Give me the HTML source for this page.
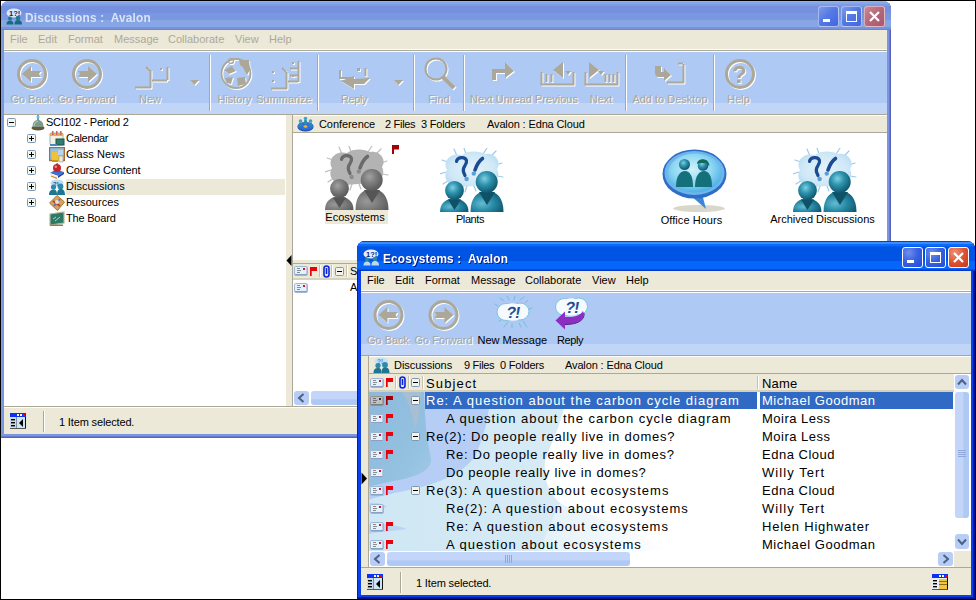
<!DOCTYPE html>
<html>
<head>
<meta charset="utf-8">
<style>
*{box-sizing:border-box;margin:0;padding:0}
html,body{width:976px;height:600px;overflow:hidden;background:#fff}
body{font-family:"Liberation Sans",sans-serif;font-size:11px;color:#000;position:relative}
.abs{position:absolute}
#frame{position:absolute;left:0;top:0;width:976px;height:600px;border:1px solid #000;z-index:100;pointer-events:none}
/* ---------- Window 1 (inactive) ---------- */
#w1{position:absolute;left:1px;top:1px;width:890px;height:437px;background:#7A96DF;box-shadow:inset -1px -1px 0 #5860C0,inset -2px -2px 0 #6A7CD2,inset 1px 0 0 #7F9EE9;border-radius:8px 8px 0 0;overflow:hidden}
#w1 .title{position:absolute;left:0;top:0;width:890px;height:29px;background:linear-gradient(#90B1F5 0px,#90B1F5 1px,#86A7E9 1px,#86A7E9 3px,#7D9CE3 3px,#7D9CE3 5px,#7590DC 5px,#7590DC 12px,#7A97E0 12px,#7A97E0 19px,#86A6E6 19px,#86A6E6 26px,#7892DD 26px,#7892DD 28px,#6C82D4 28px,#6C82D4 29px)}
#w1 .ttext{position:absolute;left:24px;top:9px;transform:scaleX(.91);transform-origin:0 0;font-weight:bold;font-size:13px;color:#D8E4F8;letter-spacing:.2px;white-space:nowrap}
#w1 .client{position:absolute;left:3px;top:29px;width:883px;height:404px;background:#ECE9D8}
.menu span{position:absolute;top:3px;white-space:nowrap}
.tb{background:#AEC9F3}
.tb .band{position:absolute;left:0;bottom:0;width:100%;background:#C1D5F7}
.lbl{position:absolute;white-space:nowrap;font-size:11px;text-align:center}
.dis{color:#ACA899;text-shadow:1px 1px 0 #fff}
.sep{position:absolute;width:2px;background:#ACA899;border-right:1px solid #fff}
.row{position:absolute;left:0;white-space:nowrap;font-size:11px}
.cap{position:absolute;width:21px;height:21px;border-radius:3px;border:1px solid #fff}
.dsc .hd{fill:var(--hd)}.dsc .bd{fill:var(--bd)}.dsc .vv{fill:var(--vv)}.dsc .cld{fill:var(--cld)}.dsc .spk{stroke:var(--spk)}.dsc .qm{stroke:var(--qm)}.dsc .dot{fill:var(--dot)}
.vt{font-size:13px;letter-spacing:.75px;white-space:nowrap;position:absolute}
.s0{letter-spacing:1.0px}.s1{letter-spacing:0.97px}.s2{letter-spacing:0.76px}.s3{letter-spacing:0.69px}.s4{letter-spacing:0.64px}.s5{letter-spacing:1.04px}.s6{letter-spacing:1.02px}.s7{letter-spacing:0.99px}.s8{letter-spacing:0.99px}.n0{letter-spacing:0.54px}.n8{letter-spacing:0.54px}.n1{letter-spacing:0.48px}.n2{letter-spacing:0.48px}.n3{letter-spacing:0.51px}.n5{letter-spacing:0.51px}.n4{letter-spacing:1.07px}.n6{letter-spacing:1.07px}.n7{letter-spacing:0.78px}
</style>
</head>
<body>

<svg width="0" height="0" style="position:absolute">
<defs>
  <radialGradient id="gT" cx="40%" cy="35%" r="65%"><stop offset="0" stop-color="#7FD0E2"/><stop offset=".45" stop-color="#2F93AE"/><stop offset="1" stop-color="#0E5770"/></radialGradient>
  <radialGradient id="gTb" cx="35%" cy="60%" r="75%"><stop offset="0" stop-color="#63BDD3"/><stop offset=".5" stop-color="#2587A3"/><stop offset="1" stop-color="#0D5068"/></radialGradient>
  <radialGradient id="gG" cx="40%" cy="35%" r="65%"><stop offset="0" stop-color="#A2A2A2"/><stop offset=".45" stop-color="#7E7E7E"/><stop offset="1" stop-color="#5A5A5A"/></radialGradient>
  <radialGradient id="gGb" cx="35%" cy="60%" r="75%"><stop offset="0" stop-color="#999"/><stop offset=".5" stop-color="#7A7A7A"/><stop offset="1" stop-color="#585858"/></radialGradient>
  <radialGradient id="gC" cx="50%" cy="50%" r="60%"><stop offset="0" stop-color="#E4F3FB"/><stop offset=".7" stop-color="#CFE8F7"/><stop offset="1" stop-color="#B5DAF2"/></radialGradient>
  <symbol id="disc" viewBox="0 0 64 64">
    <g style="stroke:var(--spk)" stroke-width="1.2" stroke-linecap="round">
      <path d="M17 8 L14 1 M26 6 L24 0 M43 6 L47 0 M50 9 L56 3 M56 17 L62 15 M57 28 L63 29 M8 14 L2 12 M6 24 L0 26 M9 32 L3 36 M27 38 L25 44 M34 38 L36 43"/>
    </g>
    <path style="fill:var(--cld)" d="M7 22 C2 13 11 4 22 7 C28 2 40 3 45 6 C55 4 62 14 57 21 C61 29 55 37 46 37 L20 39 C9 39 2 30 7 22Z"/>
    <path style="stroke:var(--qm);fill:none" stroke-width="3.2" stroke-linecap="round" d="M16.5 13.5 C17 9 25 8 26.5 12.5 C27.5 17 22 18 23.5 24 L25 27.5"/>
    <circle style="fill:var(--dot)" cx="26.6" cy="31" r="2.2"/>
    <path style="stroke:var(--qm);fill:none" stroke-width="3.6" stroke-linecap="round" d="M42.5 10.5 C39 13 36.5 17.5 35 22"/>
    <circle style="fill:var(--dot)" cx="33.8" cy="25.6" r="2.2"/>
    <path style="fill:var(--bd)" d="M0 64 C0 55 6 50.5 14 50.5 C22 50.5 28.5 55 28.5 64Z"/>
    <path style="fill:var(--vv)" d="M8 51.5 L14.5 62 L21 51.5Z"/>
    <circle style="fill:var(--hd)" cx="14.5" cy="42.5" r="9.4"/>
    <path style="fill:var(--bd)" d="M30.5 64 C30.5 50 37 43 47 43 C57 43 63.5 50 63.5 64Z"/>
    <path style="fill:var(--vv)" d="M39 44 L47 57 L55 44Z"/>
    <circle style="fill:var(--hd)" cx="46.7" cy="34" r="11"/>
  </symbol>
  <symbol id="env" viewBox="0 0 14 10">
    <rect x=".5" y=".5" width="13" height="9" rx="1.2" fill="#E6F0FA" stroke="#9DB6D6"/>
    <rect x="1" y="8" width="12" height="1" fill="#86A2C6"/><rect x="12" y="1" width="1" height="7" fill="#B5C9E2"/>
    <rect x="3" y="2" width="3" height="1" fill="#8C8C8C"/><rect x="3" y="4" width="4" height="1" fill="#8C8C8C"/><rect x="3" y="6" width="3" height="1" fill="#8C8C8C"/>
    <rect x="9" y="2" width="2" height="2" fill="#D0142C"/>
  </symbol>
  <symbol id="flag" viewBox="0 0 8 9">
    <rect x="0" y="0" width="7" height="4" fill="#E8000A"/><rect x="0" y="0" width="1.700" height="9" fill="#E8000A"/>
  </symbol>
  <symbol id="mbox" viewBox="0 0 9 9">
    <rect x=".5" y=".5" width="8" height="8" rx="1" fill="#F4F3EC" stroke="#7898B5"/>
    <rect x="2" y="4" width="5" height="1" fill="#000"/>
  </symbol>
  <symbol id="pbox" viewBox="0 0 9 9">
    <rect x=".5" y=".5" width="8" height="8" rx="1" fill="#F4F3EC" stroke="#7898B5"/>
    <rect x="2" y="4" width="5" height="1" fill="#000"/><rect x="4" y="2" width="1" height="5" fill="#000"/>
  </symbol>
  <symbol id="clip" viewBox="0 0 7 13">
    <rect x="1" y="1" width="5" height="11" rx="2.5" fill="none" stroke="#0A24E0" stroke-width="1.6"/>
    <rect x="2.7" y="3" width="1.6" height="6" fill="#0A24E0"/>
  </symbol>
  <symbol id="sbicon" viewBox="0 0 16 16">
    <rect x="0" y="0" width="16" height="16" fill="#CDE6F5"/>
    <rect x="0" y="0" width="16" height="4" fill="#0A32F0"/>
    <rect x="7" y="1" width="2" height="2" fill="#FFF6D0"/><rect x="10" y="1" width="2" height="2" fill="#FFF6D0"/><rect x="13" y="1" width="2" height="2" fill="#F00"/>
    <rect x="0" y="4" width="6" height="12" fill="#C9D9E8"/><rect x="6" y="4" width="1" height="12" fill="#7F8FA0"/>
    <rect x="1" y="6" width="4" height="1.4" fill="#000"/><rect x="1" y="9" width="4" height="1.4" fill="#000"/><rect x="1" y="12" width="4" height="1.4" fill="#000"/>
    <path d="M13 6 L9 10 L13 14Z" fill="#000"/>
    <rect x="15" y="4" width="1" height="12" fill="#111"/><rect x="0" y="15" width="16" height="1" fill="#555"/>
  </symbol>
</defs>
</svg>
<!-- ================= WINDOW 1 ================= -->
<div id="w1">
  <div class="title"></div>
  <svg class="abs" style="left:5px;top:7px" width="17" height="17" viewBox="0 0 17 17"><ellipse cx="8" cy="5" rx="7.5" ry="4.6" fill="#DCE8FA"/><text x="3" y="8" font-family="Liberation Sans" font-size="7.5" font-weight="bold" fill="#0B1E7A">1?!</text><circle cx="4" cy="10.5" r="2" fill="#1E7A8E"/><path d="M0.5 16.5 C0.5 13.5 2 12.5 4 12.5 C6 12.5 7.5 13.5 7.5 16.5Z" fill="#186B7E"/><circle cx="12" cy="10" r="2.3" fill="#1E7A8E"/><path d="M8.5 16.5 C8.5 13 10 12 12 12 C14 12 16 13 16 16.5Z" fill="#186B7E"/></svg>
  <div class="ttext">Discussions :&nbsp; Avalon</div>
  <div class="cap" style="border-color:rgba(255,255,255,.5);left:817px;top:5px;background:linear-gradient(135deg,#7F9BE6 0,#5379E6 45%,#4466DD 100%)"><div class="abs" style="left:4px;top:12px;width:7px;height:3px;background:#fff"></div></div>
  <div class="cap" style="border-color:rgba(255,255,255,.5);left:840px;top:5px;background:linear-gradient(135deg,#7F9BE6 0,#5379E6 45%,#4466DD 100%)"><div class="abs" style="left:4px;top:4px;width:11px;height:11px;border:1px solid #fff;border-top:3px solid #fff"></div></div>
  <div class="cap" style="border-color:rgba(255,255,255,.5);left:863px;top:5px;background:linear-gradient(135deg,#C78A97 0,#B4677A 50%,#A85870 100%)"><svg class="abs" style="left:3px;top:3px" width="13" height="13" viewBox="0 0 13 13"><path d="M2 2 L11 11 M11 2 L2 11" stroke="#fff" stroke-width="2.2"/></svg></div>
  <div class="client">
    <!-- menu -->
    <div class="abs menu" style="left:0;top:0;width:883px;height:19px;color:#ACA899">
      <span style="left:6px">File</span><span style="left:34px">Edit</span><span style="left:64px">Format</span><span style="left:110px">Message</span><span style="left:164px">Collaborate</span><span style="left:231px">View</span><span style="left:265px">Help</span>
    </div>
    <div class="abs" style="left:0;top:19px;width:883px;height:1px;background:#fff"></div>
    <div class="abs" style="left:0;top:20px;width:883px;height:1px;background:#ACA899"></div>
    <div class="abs" style="left:0;top:21px;width:883px;height:1px;background:#fff"></div>
    <!-- toolbar -->
    <div class="abs tb" id="tb1" style="left:0;top:22px;width:883px;height:62px">
      <div class="band" style="height:11px"></div>
      <svg class="abs" style="left:0;top:0;filter:drop-shadow(1px 1px 0 #fff)" width="883" height="62" viewBox="4 52 883 62" fill="none" stroke="#ACA899">
  <!-- go back / forward -->
  <circle cx="32" cy="74" r="13.5" stroke-width="3"/>
  <path d="M22 74 L31 66 L31 71 L41 71 L39 74 L41 77 L31 77 L31 82Z" fill="#ACA899" stroke="none"/>
  <circle cx="87" cy="74" r="13.5" stroke-width="3"/>
  <path d="M97 74 L88 66 L88 71 L78 71 L80 74 L78 77 L88 77 L88 82Z" fill="#ACA899" stroke="none"/>
  <!-- new -->
  <path d="M135 87.5 H151 M150.5 88 V70 M146 67 L150 71 M152 80.5 H167 M167.500 80 V67" stroke-width="2"/>
  <rect x="160" y="68" width="2" height="2" fill="#ACA899" stroke="none"/>
  <path d="M190 80 H199 L194.500 85Z" fill="#ACA899" stroke="none"/>
  <!-- history globe -->
  <circle cx="236" cy="73.500" r="14.500" stroke-width="1.800"/>
  <path d="M239 60 L249 60 L250 70 L247 75 L243 68 L240 65Z M224 70 L232 66 L236 71 L229 74Z M225 78 L233 77 L231 84 L227 83Z M237 78 L245 77 L246 84 L238 86Z" fill="#ACA899" stroke="none"/>
  <circle cx="231" cy="61" r="2.500" stroke-width="1.200"/>
  <!-- summarize -->
  <path d="M271 88.500 H287 M286.500 89 V72 M282 68 L286 72 M288 81.500 H298 M298.500 82 V61 M290 68.500 H298 M290 75.500 H298" stroke-width="2"/>
  <rect x="272" y="71" width="2" height="2" fill="#ACA899" stroke="none"/><rect x="272" y="80" width="2" height="2" fill="#ACA899" stroke="none"/><rect x="292" y="62" width="2" height="2" fill="#ACA899" stroke="none"/><rect x="292" y="75" width="2" height="2" fill="#ACA899" stroke="none"/>
  <!-- reply -->
  <path d="M340 70 V78 H352 M365.500 68 V76" stroke-width="1.900"/>
  <path d="M341 81 L354 76 L354 79 L370 78 L364 84 L354 84 L354 89Z" fill="#ACA899" stroke="none"/>
  <rect x="357" y="68" width="3" height="3" fill="#ACA899" stroke="none"/>
  <path d="M394 80 H403 L398.500 85Z" fill="#ACA899" stroke="none"/>
  <!-- find -->
  <circle cx="436" cy="69" r="10.500" stroke-width="2"/>
  <path d="M443 77 L454 88" stroke-width="4.500"/>
  <!-- next unread -->
  <path d="M492 80 V69 H505 V73 H496 V80Z" fill="#ACA899" stroke="none"/>
  <path d="M505 62 L514 71 L505 78Z" fill="#ACA899" stroke="none"/>
  <!-- previous -->
  <path d="M541.500 72 V84.500 H573.500 V72 M546.500 74 V82 M551.500 74 V82" stroke-width="1.900"/>
  <path d="M563 62 V78 L553 70Z" fill="#ACA899" stroke="none"/>
  <path d="M565 71 H571 L568 75Z" fill="#ACA899" stroke="none"/>
  <!-- next -->
  <path d="M585.500 72 V84.500 H617.500 V72 M605.500 74 V82 M609.500 74 V82 M613.500 74 V82" stroke-width="1.900"/>
  <path d="M589 62 V78 L599 70Z" fill="#ACA899" stroke="none"/>
  <path d="M598 71 H604 L601 75Z" fill="#ACA899" stroke="none"/>
  <!-- add to desktop -->
  <path d="M667 82.500 H684 M683.500 83 V64 M678 63.500 H683" stroke-width="1.900"/>
  <path d="M655 66 H661 V72 H664 V68 L671 75 L664 81 V77 H658 C656 77 655 75 655 73Z" fill="#ACA899" stroke="none"/>
  <!-- help -->
  <circle cx="740" cy="74" r="13.500" stroke-width="3"/>
  <text x="732" y="82.500" font-family="Liberation Sans" font-size="24" font-weight="bold" fill="#ACA899" stroke="none">?</text>
</svg>
      <div class="lbl dis" style="left:-32.5px;width:120px;top:41px;line-height:13px">Go Back</div>
      <div class="lbl dis" style="left:22.5px;width:120px;top:41px;line-height:13px">Go Forward</div>
      <div class="lbl dis" style="left:86.0px;width:120px;top:41px;line-height:13px">New</div>
      <div class="lbl dis" style="left:170.5px;width:120px;top:41px;line-height:13px">History</div>
      <div class="lbl dis" style="left:220.0px;width:120px;top:41px;line-height:13px">Summarize</div>
      <div class="lbl dis" style="left:290.0px;width:120px;top:41px;line-height:13px;letter-spacing:-.4px">Reply</div>
      <div class="lbl dis" style="left:375.0px;width:120px;top:41px;line-height:13px">Find</div>
      <div class="lbl dis" style="left:437.0px;width:120px;top:41px;line-height:13px">Next Unread</div>
      <div class="lbl dis" style="left:492.5px;width:120px;top:41px;line-height:13px">Previous</div>
      <div class="lbl dis" style="left:537.0px;width:120px;top:41px;line-height:13px">Next</div>
      <div class="lbl dis" style="left:606.0px;width:120px;top:41px;line-height:13px">Add to Desktop</div>
      <div class="lbl dis" style="left:674.5px;width:120px;top:41px;line-height:13px">Help</div>
      <div class="abs" style="left:205px;top:3px;width:1px;height:56px;background:#ACA899"></div><div class="abs" style="left:206px;top:3px;width:1px;height:56px;background:#fff"></div>
      <div class="abs" style="left:313px;top:3px;width:1px;height:56px;background:#ACA899"></div><div class="abs" style="left:314px;top:3px;width:1px;height:56px;background:#fff"></div>
      <div class="abs" style="left:409px;top:3px;width:1px;height:56px;background:#ACA899"></div><div class="abs" style="left:410px;top:3px;width:1px;height:56px;background:#fff"></div>
      <div class="abs" style="left:459px;top:3px;width:1px;height:56px;background:#ACA899"></div><div class="abs" style="left:460px;top:3px;width:1px;height:56px;background:#fff"></div>
      <div class="abs" style="left:621px;top:3px;width:1px;height:56px;background:#ACA899"></div><div class="abs" style="left:622px;top:3px;width:1px;height:56px;background:#fff"></div>
      <div class="abs" style="left:709px;top:3px;width:1px;height:56px;background:#ACA899"></div><div class="abs" style="left:710px;top:3px;width:1px;height:56px;background:#fff"></div>
    </div>
    <div class="abs" style="left:0;top:84px;width:883px;height:1px;background:#ACA899"></div>
    <!-- tree pane -->
    <div class="abs" id="tree" style="left:0;top:85px;width:282px;height:291px;background:#fff;overflow:hidden">
      <svg class="abs" style="left:3px;top:3px" width="9" height="9"><use href="#mbox"/></svg>
      <svg class="abs" style="left:27px;top:0px" width="14" height="16" viewBox="0 0 14 16"><rect x="6" y="0" width="2" height="5" fill="#4FA3C8"/><circle cx="7" cy="2" r="1.6" fill="#6BC0DC"/><ellipse cx="7" cy="13" rx="6.5" ry="2.6" fill="#5E5A3C"/><path d="M1.5 12 C1.5 7 4 5 7 5 C10 5 12.5 7 12.5 12Z" fill="#7E9A86"/><path d="M3 11 C3 8 5 6.5 7 6.5" stroke="#B9D3C3" fill="none"/></svg>
      <div class="row" style="left:43px;top:0px;line-height:14px;letter-spacing:-0.29px;margin-left:-1px">SCI102 - Period 2</div>
      <svg class="abs" style="left:23px;top:19px" width="9" height="9"><use href="#pbox"/></svg>
      <svg class="abs" style="left:45px;top:16px" width="16" height="16" viewBox="0 0 16 16"><rect x="1" y="2" width="13" height="12" rx="1" fill="#F3F1E2" stroke="#9DB3C8"/><rect x="1" y="2" width="13" height="3" fill="#E8B33A"/><rect x="3" y="0" width="1.5" height="4" fill="#C66"/><rect x="7" y="0" width="1.5" height="4" fill="#C66"/><rect x="11" y="0" width="1.5" height="4" fill="#C66"/><rect x="7" y="8" width="8" height="6" fill="#2E7D6E" stroke="#1B5247"/><rect x="1" y="13" width="7" height="2" fill="#4C86C6"/></svg>
      <div class="row" style="left:62px;top:16px;line-height:14px;letter-spacing:-0.31px;margin-left:0px">Calendar</div>
      <svg class="abs" style="left:23px;top:35px" width="9" height="9"><use href="#pbox"/></svg>
      <svg class="abs" style="left:45px;top:32px" width="16" height="16" viewBox="0 0 16 16"><rect x=".5" y=".5" width="15" height="13" fill="#8FC3E6" stroke="#A86A3C" stroke-width="1.4"/><rect x="3" y="5" width="7" height="9" fill="#F0C23A"/><rect x="9" y="3" width="5" height="5" fill="#B8D4EE"/><rect x="10" y="9" width="4" height="6" fill="#EDE9DA" stroke="#888" stroke-width=".5"/><rect x="3" y="13" width="6" height="2" fill="#C9961E"/></svg>
      <div class="row" style="left:62px;top:32px;line-height:14px;letter-spacing:0.07px;margin-left:0px">Class News</div>
      <svg class="abs" style="left:23px;top:51px" width="9" height="9"><use href="#pbox"/></svg>
      <svg class="abs" style="left:45px;top:48px" width="16" height="16" viewBox="0 0 16 16"><path d="M1 10 L9 13 L15 9 L7 6.5Z" fill="#3B6FD0"/><path d="M1 10 L9 13 L9 15 L1 12Z" fill="#F2F2F2"/><path d="M9 13 L15 9 L15 11 L9 15Z" fill="#1E44A0"/><path d="M2 13 L8 15.3" stroke="#D38A2A" stroke-width="1.3"/><circle cx="8" cy="5" r="4" fill="#C8242B"/><circle cx="6.8" cy="3.8" r="1.3" fill="#E88"/><rect x="7.6" y="0" width="1" height="2" fill="#353"/></svg>
      <div class="row" style="left:62px;top:48px;line-height:14px;letter-spacing:-0.2px;margin-left:0px">Course Content</div>
      <div class="abs" style="left:62px;top:64px;width:219px;height:16px;background:#ECE9D8"></div>
      <svg class="abs" style="left:23px;top:67px" width="9" height="9"><use href="#pbox"/></svg>
      <svg class="abs" style="left:45px;top:64px" width="16" height="16" viewBox="0 0 16 16"><ellipse cx="8" cy="4" rx="6.5" ry="3.6" fill="#B9DDF3"/><text x="4" y="6.5" font-family="Liberation Sans" font-size="6" font-weight="bold" fill="#1C4C94">?!</text><circle cx="4.5" cy="8" r="2.6" fill="#2E8AA6"/><path d="M0 16 C0 12 2 10.5 4.5 10.5 C7 10.5 8 12 8 16Z" fill="#1F7690"/><circle cx="11.5" cy="7.5" r="2.9" fill="#2E8AA6"/><path d="M8 16 C8 11.5 9.5 10 11.8 10 C14 10 16 11.5 16 16Z" fill="#1F7690"/></svg>
      <div class="row" style="left:62px;top:64px;line-height:14px;letter-spacing:0px;margin-left:0px">Discussions</div>
      <svg class="abs" style="left:23px;top:83px" width="9" height="9"><use href="#pbox"/></svg>
      <svg class="abs" style="left:45px;top:80px" width="16" height="16" viewBox="0 0 16 16"><path d="M8 0.5 L15.5 7 L8.5 15.5 L0.5 8Z" fill="#D9A25C" stroke="#A8743A"/><path d="M4 6 L11 11" stroke="#C33" stroke-width="2"/><path d="M11 4 L5 11" stroke="#3B77C7" stroke-width="1.6"/><circle cx="8" cy="7" r="2" fill="#E8E2C8"/></svg>
      <div class="row" style="left:62px;top:80px;line-height:14px;letter-spacing:0.04px;margin-left:0px">Resources</div>
      <svg class="abs" style="left:45px;top:96px" width="16" height="16" viewBox="0 0 16 16"><path d="M1 3 L15 1 L15 12 L1 14Z" fill="#2C7A63" stroke="#B9B4A0" stroke-width="1.2"/><path d="M4 8 L7 6 M6 10 L11 6" stroke="#CFE9DF" stroke-width=".8"/><rect x="1" y="13.5" width="13" height="1.5" fill="#8A7A55"/></svg>
      <div class="row" style="left:62px;top:96px;line-height:14px;letter-spacing:-0.2px;margin-left:0px">The Board</div>
    </div>
    <!-- splitter -->
    <div class="abs" style="left:288px;top:85px;width:1px;height:291px;background:#ACA899"></div>
    <svg class="abs" style="left:282px;top:225px" width="6" height="11"><path d="M5.5 0 L0.5 5.5 L5.5 11Z" fill="#000"/></svg>
    <!-- right pane -->
    <div class="abs" id="rp" style="left:289px;top:85px;width:594px;height:291px;background:#fff;overflow:hidden">
      
      <div class="abs" style="left:0;top:0;width:594px;height:1px;background:#fff"></div>
      <div class="abs" style="left:0;top:1px;width:594px;height:16px;background:#ECE9D8"></div>
      <div class="abs" style="left:0;top:17px;width:594px;height:1px;background:#ACA899"></div>
      <svg class="abs" style="left:4px;top:1px" width="17" height="16" viewBox="0 0 17 16"><ellipse cx="8.500" cy="11" rx="8" ry="4.500" fill="#1E55B8"/><ellipse cx="8.500" cy="10" rx="8" ry="4" fill="#2F6FD6"/><path d="M6 10 l3 -1 l2 2 l-3 1z" fill="#E2B93B"/><circle cx="3.500" cy="5" r="1.800" fill="#3FA3C4"/><rect x="2" y="6.500" width="3" height="4" rx="1" fill="#2B8CAD"/><circle cx="8.500" cy="2.500" r="1.800" fill="#3FA3C4"/><rect x="7" y="4" width="3" height="4.500" rx="1" fill="#2B8CAD"/><circle cx="13.500" cy="5" r="1.800" fill="#3FA3C4"/><rect x="12" y="6.500" width="3" height="4" rx="1" fill="#2B8CAD"/></svg>
      <div class="row" style="left:26px;top:2px;line-height:15px;letter-spacing:-.07px">Conference</div>
      <div class="row" style="left:92px;top:2px;line-height:15px;letter-spacing:-.3px">2 Files</div>
      <div class="row" style="left:128px;top:2px;line-height:15px;letter-spacing:-.19px">3 Folders</div>
      <div class="row" style="left:194px;top:2px;line-height:15px;letter-spacing:-.13px">Avalon : Edna Cloud</div>
      <!-- big icons -->
      <svg class="abs dsc" style="left:32px;top:31px;--hd:url(#gG);--bd:url(#gGb);--vv:#555;--cld:#B3B3B3;--spk:#BDBDBD;--qm:#6A6A6A;--dot:#8C8C8C" width="64" height="64"><use href="#disc"/></svg>
      <svg class="abs" style="left:99px;top:30px" width="8" height="9" viewBox="0 0 8 9"><rect width="7" height="4.500" fill="#A5000A"/><rect width="2" height="9" fill="#A5000A"/></svg>
      <div class="abs" style="left:32px;top:95px;width:63px;height:14px;background:#ECE9D8"></div>
      <div class="lbl" style="left:12px;width:100px;top:95px;line-height:14px">Ecosystems</div>
      <svg class="abs dsc" style="left:147px;top:33px;--hd:url(#gT);--bd:url(#gTb);--vv:#0F5268;--cld:url(#gC);--spk:#9CCBEA;--qm:#1B4B92;--dot:#5E9FD8" width="64" height="64"><use href="#disc"/></svg>
      <div class="lbl" style="left:127px;width:100px;top:97px;line-height:14px;letter-spacing:-.4px">Plants</div>
      <svg class="abs" style="left:367px;top:32px" width="68" height="66" viewBox="660 147 68 66">
        <defs><radialGradient id="gB" cx="45%" cy="40%" r="60%"><stop offset="0" stop-color="#D2F1FA"/><stop offset=".6" stop-color="#8FD8F3"/><stop offset="1" stop-color="#4FB0E8"/></radialGradient></defs>
        <ellipse cx="699" cy="208.500" rx="26" ry="3.500" fill="#D9D6CC"/>
        <path d="M682 188 L706 209 L701 190Z" fill="#3D86D6"/>
        <ellipse cx="694.500" cy="174" rx="32" ry="24.500" fill="#2C6FC8"/>
        <ellipse cx="694.500" cy="173" rx="30" ry="22" fill="#6FB4EA"/>
        <ellipse cx="695" cy="173" rx="27" ry="19.500" fill="url(#gB)"/>
        <path d="M676 187 C676 176 680 171 685 171 C690 171 693 176 693 187Z" fill="#14707A"/>
        <circle cx="684.500" cy="164.500" r="5.500" fill="url(#gT)"/>
        <path d="M695 187 C695 176 699 171 704 171 C709 171 712 176 712 187Z" fill="#14707A"/>
        <circle cx="703" cy="165.500" r="5.300" fill="url(#gT)"/>
        <path d="M697 164 C697 158 709 157 709.500 166 L706 163 L699 163Z" fill="#116A5E"/>
      </svg>
      <div class="lbl" style="left:348.5px;width:100px;top:98px;line-height:14px;letter-spacing:.05px">Office Hours</div>
      <svg class="abs dsc" style="left:500px;top:33px;--hd:url(#gT);--bd:url(#gTb);--vv:#0F5268;--cld:url(#gC);--spk:#9CCBEA;--qm:#1B4B92;--dot:#5E9FD8" width="64" height="64"><use href="#disc"/></svg>
      <div class="lbl" style="left:469.5px;width:120px;top:97px;line-height:14px">Archived Discussions</div>
      <!-- horizontal splitter + list header -->
      <div class="abs" style="left:0;top:145px;width:594px;height:3px;background:#ECE9D8"></div>
      <div class="abs" style="left:0;top:148px;width:594px;height:1px;background:#ACA899"></div>
      <div class="abs" style="left:0;top:149px;width:594px;height:14px;background:#ECE9D8"></div>
      <div class="abs" style="left:0;top:163px;width:594px;height:2px;background:#D8D2BD"></div>
      <svg class="abs" style="left:1px;top:151px" width="14" height="10"><use href="#env"/></svg>
      <svg class="abs" style="left:17px;top:152px" width="8" height="9"><use href="#flag"/></svg>
      <svg class="abs" style="left:30px;top:150px" width="7" height="13"><use href="#clip"/></svg>
      <svg class="abs" style="left:42px;top:152px" width="9" height="9"><use href="#mbox"/></svg>
      <div class="abs" style="left:57px;top:149px;font-size:11px;line-height:15px">S</div>
      <div class="abs" style="left:26px;top:150px;width:1px;height:12px;background:#C5C2B2"></div><div class="abs" style="left:27px;top:150px;width:1px;height:12px;background:#fff"></div><div class="abs" style="left:38px;top:150px;width:1px;height:12px;background:#C5C2B2"></div><div class="abs" style="left:39px;top:150px;width:1px;height:12px;background:#fff"></div><div class="abs" style="left:53px;top:150px;width:1px;height:12px;background:#C5C2B2"></div><div class="abs" style="left:54px;top:150px;width:1px;height:12px;background:#fff"></div><svg class="abs" style="left:1px;top:168px" width="14" height="10"><use href="#env"/></svg>
      <div class="abs" style="left:57px;top:165px;font-size:11px;line-height:15px">A</div>
      <!-- scrollbar -->
      <div class="abs" style="left:0;top:275px;width:594px;height:16px;background:#fff"></div>
      <div class="abs" style="left:1px;top:276px;width:15px;height:14px;border-radius:3px;background:#B8CDF6"><svg class="abs" style="left:3px;top:2px" width="8" height="10" viewBox="0 0 8 10"><path d="M6.500 1 L2 5 L6.500 9" fill="none" stroke="#4D6185" stroke-width="2"/></svg></div>
      <div class="abs" style="left:18px;top:276px;width:300px;height:14px;border-radius:3px 0 0 3px;background:linear-gradient(#C3D6FA 0,#C3D6FA 60%,#AFC9F5 61%,#AFC9F5 100%)"></div>

    </div>
    <!-- status -->
    <div class="abs" style="left:0;top:376px;width:883px;height:1px;background:#ACA899"></div>
    <div class="abs" style="left:0;top:377px;width:883px;height:1px;background:#fff"></div>
    <div class="abs" id="st1" style="left:0;top:378px;width:883px;height:26px;background:#ECE9D8">
      <svg class="abs" style="left:6px;top:5px" width="16" height="16"><use href="#sbicon"/></svg>
      <div class="abs" style="left:39px;top:3px;width:1px;height:21px;background:#ACA899"></div><div class="abs" style="left:40px;top:3px;width:1px;height:21px;background:#fff"></div>
      <div class="abs" style="left:55px;top:8px;white-space:nowrap;letter-spacing:-.15px">1 Item selected.</div>
    </div>
  </div>
</div>

<!-- ================= WINDOW 2 ================= -->
<div id="w2" class="abs" style="left:357px;top:241px;width:618px;height:358px;background:#0A3FEA;box-shadow:inset -1px -1px 0 #00138C,inset -2px -2px 0 #001EA0,inset 1px 0 0 #0019CF;border-radius:8px 8px 0 0;overflow:hidden">
  <div class="abs" id="t2" style="left:0;top:0;width:618px;height:30px;background:linear-gradient(#0046D5 0px,#0046D5 1px,#3A8CFF 1px,#3A8CFF 3px,#0A6AFC 3px,#0A6AFC 5px,#025CEC 5px,#025CEC 6px,#0054E3 6px,#0054E3 20px,#0666FA 20px,#0666FA 28px,#0050E0 28px,#0050E0 29px,#0038C8 29px,#0038C8 30px)"></div>
  <svg class="abs" style="left:6px;top:8px" width="17" height="17" viewBox="0 0 17 17"><ellipse cx="8" cy="5" rx="7.5" ry="4.6" fill="#E6EEFC"/><text x="3" y="8" font-family="Liberation Sans" font-size="7.5" font-weight="bold" fill="#0B1E7A">1?!</text><circle cx="4" cy="10.5" r="2" fill="#2A8A9E"/><path d="M0.5 16.5 C0.5 13.5 2 12.5 4 12.5 C6 12.5 7.5 13.5 7.5 16.5Z" fill="#BFD8E8"/><circle cx="12" cy="10" r="2.3" fill="#2A8A9E"/><path d="M8.5 16.5 C8.5 13 10 12 12 12 C14 12 16 13 16 16.5Z" fill="#BFD8E8"/></svg>
  <div class="abs" style="left:26px;top:10px;font-weight:bold;font-size:13px;color:#fff;letter-spacing:.2px;white-space:nowrap;text-shadow:1px 1px 0 #0A1883;transform:scaleX(.91);transform-origin:0 0">Ecosystems :&nbsp; Avalon</div>
  <div class="cap" style="left:545px;top:6px;background:radial-gradient(circle at 30% 25%,#6F8FEF 0,#3A63E0 45%,#1F4BD8 100%)"><div class="abs" style="left:4px;top:12px;width:7px;height:3px;background:#fff"></div></div>
  <div class="cap" style="left:568px;top:6px;background:radial-gradient(circle at 30% 25%,#6F8FEF 0,#3A63E0 45%,#1F4BD8 100%)"><div class="abs" style="left:4px;top:4px;width:11px;height:11px;border:1px solid #fff;border-top:3px solid #fff"></div></div>
  <div class="cap" style="left:591px;top:6px;background:radial-gradient(circle at 30% 25%,#EE9478 0,#DE5232 50%,#C3381A 100%)"><svg class="abs" style="left:3px;top:3px" width="13" height="13" viewBox="0 0 13 13"><path d="M2 2 L11 11 M11 2 L2 11" stroke="#fff" stroke-width="2.2"/></svg></div>
  <div class="abs" id="c2" style="left:4px;top:30px;width:610px;height:324px;background:#ECE9D8;overflow:hidden">
    <div class="abs menu" style="left:0;top:0;width:610px;height:19px">
      <span style="left:6px">File</span><span style="left:34px">Edit</span><span style="left:64px">Format</span><span style="left:110px">Message</span><span style="left:164px">Collaborate</span><span style="left:231px">View</span><span style="left:265px">Help</span>
    </div>
    <div class="abs" style="left:0;top:19px;width:610px;height:1px;background:#fff"></div>
    <div class="abs" style="left:0;top:20px;width:610px;height:1px;background:#ACA899"></div>
    <div class="abs" style="left:0;top:21px;width:610px;height:1px;background:#fff"></div>
    <!-- toolbar y=293..354 -->
    <div class="abs tb" style="left:0;top:22px;width:610px;height:62px">
      <div class="band" style="height:11px"></div>
      <svg class="abs" style="left:0;top:0;filter:drop-shadow(1px 1px 0 #fff)" width="120" height="62" viewBox="361 293 120 62" fill="none" stroke="#ACA899">
        <circle cx="388.500" cy="315" r="13.500" stroke-width="3"/>
        <path d="M378.500 315 L387.500 307 L387.500 312 L397.500 312 L395.500 315 L397.500 318 L387.500 318 L387.500 323Z" fill="#ACA899" stroke="none"/>
        <circle cx="443.500" cy="315" r="13.500" stroke-width="3"/>
        <path d="M453.500 315 L444.500 307 L444.500 312 L434.500 312 L436.500 315 L434.500 318 L444.500 318 L444.500 323Z" fill="#ACA899" stroke="none"/>
      </svg>
      <svg class="abs" style="left:0;top:0" width="300" height="62" viewBox="361 293 300 62">
        <g stroke="#6FC0DA" stroke-width="1" stroke-linecap="round" fill="none">
          <path d="M504 301 L500 298 M509 300 L507 296 M514 300 L515 296 M520 300 L524 297 M525 303 L528 300 M499 321 L503 319 M504 327 L508 322 M512 324 L512 328 M519 323 L521 327 M523 321 L527 327 M498 306 L495 304 M529 309 L532 308"/>
        </g>
        <ellipse cx="506" cy="312" rx="9" ry="8.500" fill="#F4FAFE" stroke="#7CC4DC"/>
        <ellipse cx="520" cy="311.500" rx="9" ry="8.500" fill="#F4FAFE" stroke="#7CC4DC"/>
        <ellipse cx="513" cy="312" rx="11" ry="8.800" fill="#F4FAFE"/>
        <text x="0" y="0" font-family="Liberation Sans" font-size="16" font-weight="bold" fill="#1F4E96" transform="translate(505.500 318) skewX(-10)" style="letter-spacing:-1px">?!</text>
        <ellipse cx="564.500" cy="307" rx="9" ry="8.500" fill="#F4FAFE" stroke="#7CC4DC"/>
        <ellipse cx="578.500" cy="306.500" rx="9" ry="8.500" fill="#F4FAFE" stroke="#7CC4DC"/>
        <ellipse cx="571.500" cy="307" rx="11" ry="8.800" fill="#F4FAFE"/>
        <text x="0" y="0" font-family="Liberation Sans" font-size="16" font-weight="bold" fill="#1F4E96" transform="translate(564.500 313) skewX(-10)" style="letter-spacing:-1px">?!</text>
        <path d="M555.500 320.500 L565 311.500 L565 317 C574 317.500 580 316 583 311 C586 318 580 324.500 565 324.500 L565 329.500Z" fill="#8B2FC2"/>
        <path d="M565 324.500 C578 324.500 585 320 584 313" fill="none" stroke="#5E1A8C" stroke-width="1"/>
      </svg>
      <div class="lbl dis" style="left:-33px;width:120px;top:41px;line-height:13px">Go Back</div>
      <div class="lbl dis" style="left:22.5px;width:120px;top:41px;line-height:13px">Go Forward</div>
      <div class="lbl" style="left:91.29999999999995px;width:120px;top:41px;line-height:13px">New Message</div>
      <div class="lbl" style="left:149px;width:120px;top:41px;line-height:13px;letter-spacing:-.4px">Reply</div>
    </div>
    <div class="abs" style="left:0;top:84px;width:610px;height:1px;background:#ACA899"></div>
    <!-- left strip -->
    <div class="abs" style="left:7px;top:85px;width:1px;height:211px;background:#ACA899"></div>
    <svg class="abs" style="left:0;top:201px" width="7" height="13"><path d="M0.500 0.500 L6 6.500 L0.500 12.500Z" fill="#000"/></svg>
    <!-- info header y=356..372 -->
    <div class="abs" style="left:8px;top:85px;width:602px;height:1px;background:#fff"></div>
    <div class="abs" style="left:8px;top:102px;width:602px;height:1px;background:#ACA899"></div>
    <svg class="abs" style="left:12px;top:86px" width="17" height="16" viewBox="0 0 16 16"><ellipse cx="8" cy="4.500" rx="7" ry="4" fill="#C4E2F5"/><text x="3.500" y="7" font-family="Liberation Sans" font-size="6.500" font-weight="bold" fill="#4E8FD0">?!</text><circle cx="4.500" cy="8.500" r="2.600" fill="#2E8AA6"/><path d="M0 16 C0 12 2 11 4.500 11 C7 11 8 12 8 16Z" fill="#1F7690"/><circle cx="11.500" cy="8" r="2.900" fill="#2E8AA6"/><path d="M8 16 C8 11.500 9.500 10.500 11.800 10.500 C14 10.500 16 11.500 16 16Z" fill="#1F7690"/></svg>
    <div class="row" style="left:33px;top:87px;line-height:15px;letter-spacing:-.05px">Discussions</div>
    <div class="row" style="left:103px;top:87px;line-height:15px;letter-spacing:-.3px">9 Files</div>
    <div class="row" style="left:139px;top:87px;line-height:15px;letter-spacing:-.19px">0 Folders</div>
    <div class="row" style="left:204px;top:87px;line-height:15px;letter-spacing:-.13px">Avalon : Edna Cloud</div>
    <!-- list header y=374..391 -->
    <div class="abs" style="left:8px;top:119px;width:585px;height:2px;background:#D6D0BA"></div>
    <svg class="abs" style="left:9px;top:107px" width="14" height="10"><use href="#env"/></svg>
    <svg class="abs" style="left:25px;top:107px" width="8" height="9"><use href="#flag"/></svg>
    <div class="abs" style="left:34px;top:105px;width:1px;height:13px;background:#C5C2B2"></div><div class="abs" style="left:35px;top:105px;width:1px;height:13px;background:#fff"></div>
    <svg class="abs" style="left:38px;top:105px" width="7" height="13"><use href="#clip"/></svg>
    <div class="abs" style="left:47px;top:105px;width:1px;height:13px;background:#C5C2B2"></div><div class="abs" style="left:48px;top:105px;width:1px;height:13px;background:#fff"></div>
    <svg class="abs" style="left:50px;top:107px" width="9" height="9"><use href="#mbox"/></svg>
    <div class="abs" style="left:61px;top:105px;width:1px;height:13px;background:#C5C2B2"></div><div class="abs" style="left:62px;top:105px;width:1px;height:13px;background:#fff"></div>
    <div class="vt" style="left:65px;top:103px;line-height:19px;letter-spacing:1.14px">Subject</div>
    <div class="abs" style="left:396px;top:105px;width:1px;height:13px;background:#C5C2B2"></div><div class="abs" style="left:397px;top:105px;width:1px;height:13px;background:#fff"></div>
    <div class="vt" style="left:401px;top:103px;line-height:19px;letter-spacing:.2px">Name</div>
    <!-- list body y=392..550, x=369..953 -->
    <div class="abs" id="list" style="left:8px;top:121px;width:585px;height:159px;background:#fff;overflow:hidden">
      <svg class="abs" style="left:0;top:0" width="585" height="159" viewBox="0 0 585 159">
        <defs>
          <linearGradient id="wm1" x1="0" x2="1" y1="0" y2="0"><stop offset="0" stop-color="#CFE7F4"/><stop offset=".8" stop-color="#D8ECF6"/><stop offset="1" stop-color="#fff"/></linearGradient>
          <linearGradient id="wm2" x1="0" x2="1" y1="0" y2="1"><stop offset="0" stop-color="#8DB8DB"/><stop offset=".7" stop-color="#95C2E1"/><stop offset="1" stop-color="#A2C8E8"/></linearGradient>
          <linearGradient id="wm3" x1="0" x2="1" y1="0" y2="0"><stop offset="0" stop-color="#E2F1F8"/><stop offset="1" stop-color="#fff"/></linearGradient>
        </defs>
        <path d="M0 0 H198 C196 25 182 50 176 70 C174 90 182 108 202 118 C225 130 260 145 300 159 H0Z" fill="url(#wm1)"/>
        <path d="M190 112 C230 124 270 140 300 159 H170Z" fill="url(#wm3)"/>
        <path d="M0 0 H122 C120 25 114 48 106 64 C96 80 70 92 40 98 C20 102 8 105 0 108Z" fill="#B6CEF5"/>
        <path d="M0 0 H55 C56 30 58 50 62 66 C63 78 50 84 30 88 C15 91 5 93 0 95Z" fill="url(#wm2)"/>
        <path d="M33 0 H52 C51 14 50 26 46 37 C44 24 40 10 33 0Z" fill="#A8BED2"/>
        <path d="M0 111 C8 110 14 112 18 115 C12 117 6 118 0 120Z M0 133 C14 131 28 133 38 137 C26 139 12 139 0 142Z" fill="#BDD3F4"/>
      </svg>
        <div class="abs" style="left:56px;top:0px;width:332px;height:17px;background:#316AC5"></div>
        <div class="abs" style="left:391px;top:0px;width:193px;height:17px;background:#316AC5"></div>
        <svg class="abs" style="left:1px;top:4px;filter:grayscale(1) brightness(.8)" width="14" height="10"><use href="#env"/></svg>
        <svg class="abs" style="left:17px;top:4px;filter:brightness(.7)" width="8" height="9"><use href="#flag"/></svg>
        <svg class="abs" style="left:42px;top:4px" width="9" height="9"><use href="#mbox"/></svg>
        <div class="vt s0" style="left:57px;top:0px;line-height:17px;color:#fff">Re: A question about the carbon cycle diagram</div>
        <div class="vt n0" style="left:393px;top:0px;line-height:17px;color:#fff">Michael Goodman</div>
        <svg class="abs" style="left:1px;top:22px" width="14" height="10"><use href="#env"/></svg>
        <svg class="abs" style="left:17px;top:22px" width="8" height="9"><use href="#flag"/></svg>
        <div class="vt s1" style="left:77px;top:18px;line-height:17px;color:#000">A question about the carbon cycle diagram</div>
        <div class="vt n1" style="left:393px;top:18px;line-height:17px;color:#000">Moira Less</div>
        <svg class="abs" style="left:1px;top:40px" width="14" height="10"><use href="#env"/></svg>
        <svg class="abs" style="left:17px;top:40px" width="8" height="9"><use href="#flag"/></svg>
        <svg class="abs" style="left:42px;top:40px" width="9" height="9"><use href="#mbox"/></svg>
        <div class="vt s2" style="left:57px;top:36px;line-height:17px;color:#000">Re(2): Do people really live in domes?</div>
        <div class="vt n2" style="left:393px;top:36px;line-height:17px;color:#000">Moira Less</div>
        <svg class="abs" style="left:1px;top:58px" width="14" height="10"><use href="#env"/></svg>
        <svg class="abs" style="left:17px;top:58px" width="8" height="9"><use href="#flag"/></svg>
        <div class="vt s3" style="left:77px;top:54px;line-height:17px;color:#000">Re: Do people really live in domes?</div>
        <div class="vt n3" style="left:393px;top:54px;line-height:17px;color:#000">Edna Cloud</div>
        <svg class="abs" style="left:1px;top:76px" width="14" height="10"><use href="#env"/></svg>
        <div class="vt s4" style="left:77px;top:72px;line-height:17px;color:#000">Do people really live in domes?</div>
        <div class="vt n4" style="left:393px;top:72px;line-height:17px;color:#000">Willy Tert</div>
        <svg class="abs" style="left:1px;top:94px" width="14" height="10"><use href="#env"/></svg>
        <svg class="abs" style="left:17px;top:94px" width="8" height="9"><use href="#flag"/></svg>
        <svg class="abs" style="left:42px;top:94px" width="9" height="9"><use href="#mbox"/></svg>
        <div class="vt s5" style="left:57px;top:90px;line-height:17px;color:#000">Re(3): A question about ecosystems</div>
        <div class="vt n5" style="left:393px;top:90px;line-height:17px;color:#000">Edna Cloud</div>
        <svg class="abs" style="left:1px;top:112px" width="14" height="10"><use href="#env"/></svg>
        <div class="vt s6" style="left:77px;top:108px;line-height:17px;color:#000">Re(2): A question about ecosystems</div>
        <div class="vt n6" style="left:393px;top:108px;line-height:17px;color:#000">Willy Tert</div>
        <svg class="abs" style="left:1px;top:130px" width="14" height="10"><use href="#env"/></svg>
        <svg class="abs" style="left:17px;top:130px" width="8" height="9"><use href="#flag"/></svg>
        <div class="vt s7" style="left:77px;top:126px;line-height:17px;color:#000">Re: A question about ecosystems</div>
        <div class="vt n7" style="left:393px;top:126px;line-height:17px;color:#000">Helen Highwater</div>
        <svg class="abs" style="left:1px;top:148px" width="14" height="10"><use href="#env"/></svg>
        <svg class="abs" style="left:17px;top:148px" width="8" height="9"><use href="#flag"/></svg>
        <div class="vt s8" style="left:77px;top:144px;line-height:17px;color:#000">A question about ecosystems</div>
        <div class="vt n8" style="left:393px;top:144px;line-height:17px;color:#000">Michael Goodman</div>
    </div>
    <!-- v scrollbar x=954..969 y=374..550 -->
    <div class="abs" style="left:593px;top:103px;width:16px;height:177px;background:#fff"></div>
    <div class="abs" style="left:609px;top:103px;width:1px;height:177px;background:#fff"></div>
    <div class="abs" style="left:594px;top:104px;width:14px;height:14px;border-radius:3px;background:#B8CDF6"><svg class="abs" style="left:2px;top:3px" width="10" height="8" viewBox="0 0 10 8"><path d="M1 6.500 L5 2 L9 6.500" fill="none" stroke="#4D6185" stroke-width="2"/></svg></div>
    <div class="abs" style="left:594px;top:121px;width:14px;height:126px;border-radius:3px;background:linear-gradient(90deg,#C3D6FA 0,#C3D6FA 60%,#AFC9F5 61%,#AFC9F5 100%)"><svg class="abs" style="left:3px;top:58px" width="8" height="9"><path d="M0 .500 H8 M0 2.500 H8 M0 4.500 H8 M0 6.500 H8" stroke="#8FA9DB"/></svg></div>
    <div class="abs" style="left:594px;top:263px;width:14px;height:15px;border-radius:3px;background:#B8CDF6"><svg class="abs" style="left:2px;top:4px" width="10" height="8" viewBox="0 0 10 8"><path d="M1 1.500 L5 6 L9 1.500" fill="none" stroke="#4D6185" stroke-width="2"/></svg></div>
    <!-- h scrollbar y=551..566 x=369..953 -->
    <div class="abs" style="left:8px;top:280px;width:585px;height:16px;background:#fff"></div>
    <div class="abs" style="left:9px;top:281px;width:15px;height:14px;border-radius:3px;background:#B8CDF6"><svg class="abs" style="left:3px;top:2px" width="8" height="10" viewBox="0 0 8 10"><path d="M6.500 1 L2 5 L6.500 9" fill="none" stroke="#4D6185" stroke-width="2"/></svg></div>
    <div class="abs" style="left:26px;top:281px;width:243px;height:14px;border-radius:3px;background:linear-gradient(#C3D6FA 0,#C3D6FA 60%,#AFC9F5 61%,#AFC9F5 100%)"><svg class="abs" style="left:118px;top:3px" width="9" height="8"><path d="M.500 0 V8 M2.500 0 V8 M4.500 0 V8 M6.500 0 V8" stroke="#8FA9DB"/></svg></div>
    <div class="abs" style="left:577px;top:281px;width:15px;height:14px;border-radius:3px;background:#B8CDF6"><svg class="abs" style="left:4px;top:2px" width="8" height="10" viewBox="0 0 8 10"><path d="M1.500 1 L6 5 L1.500 9" fill="none" stroke="#4D6185" stroke-width="2"/></svg></div>
    <!-- status y=568..594 -->
    <div class="abs" style="left:0;top:296px;width:610px;height:1px;background:#ACA899"></div>
    <div class="abs" style="left:0;top:297px;width:610px;height:27px;background:#ECE9D8">
      <svg class="abs" style="left:6px;top:6px" width="16" height="16"><use href="#sbicon"/></svg>
      <div class="abs" style="left:39px;top:4px;width:1px;height:21px;background:#ACA899"></div><div class="abs" style="left:40px;top:4px;width:1px;height:21px;background:#fff"></div>
      <div class="abs" style="left:55px;top:9px;white-space:nowrap;letter-spacing:-.15px">1 Item selected.</div>
      <svg class="abs" style="left:571px;top:6px" width="16" height="16" viewBox="0 0 16 16"><rect width="16" height="16" fill="#E9EEF5"/><rect width="16" height="4" fill="#0A32F0"/><rect x="7" y="1" width="2" height="2" fill="#FFF6D0"/><rect x="10" y="1" width="2" height="2" fill="#FFF6D0"/><rect x="13" y="1" width="2" height="2" fill="#F00"/><rect x="1" y="6" width="4" height="1.4" fill="#000"/><rect x="1" y="9" width="4" height="1.4" fill="#000"/><rect x="1" y="12" width="4" height="1.4" fill="#000"/><rect x="7" y="5" width="8" height="10" fill="#F2C63C"/><rect x="7" y="7" width="8" height="1" fill="#8A6A10"/><rect x="7" y="10" width="8" height="1" fill="#8A6A10"/><rect x="15" y="4" width="1" height="12" fill="#111"/><rect y="15" width="16" height="1" fill="#555"/></svg>
    </div>
  </div>
</div>
<div id="frame"></div>
</body>
</html>
